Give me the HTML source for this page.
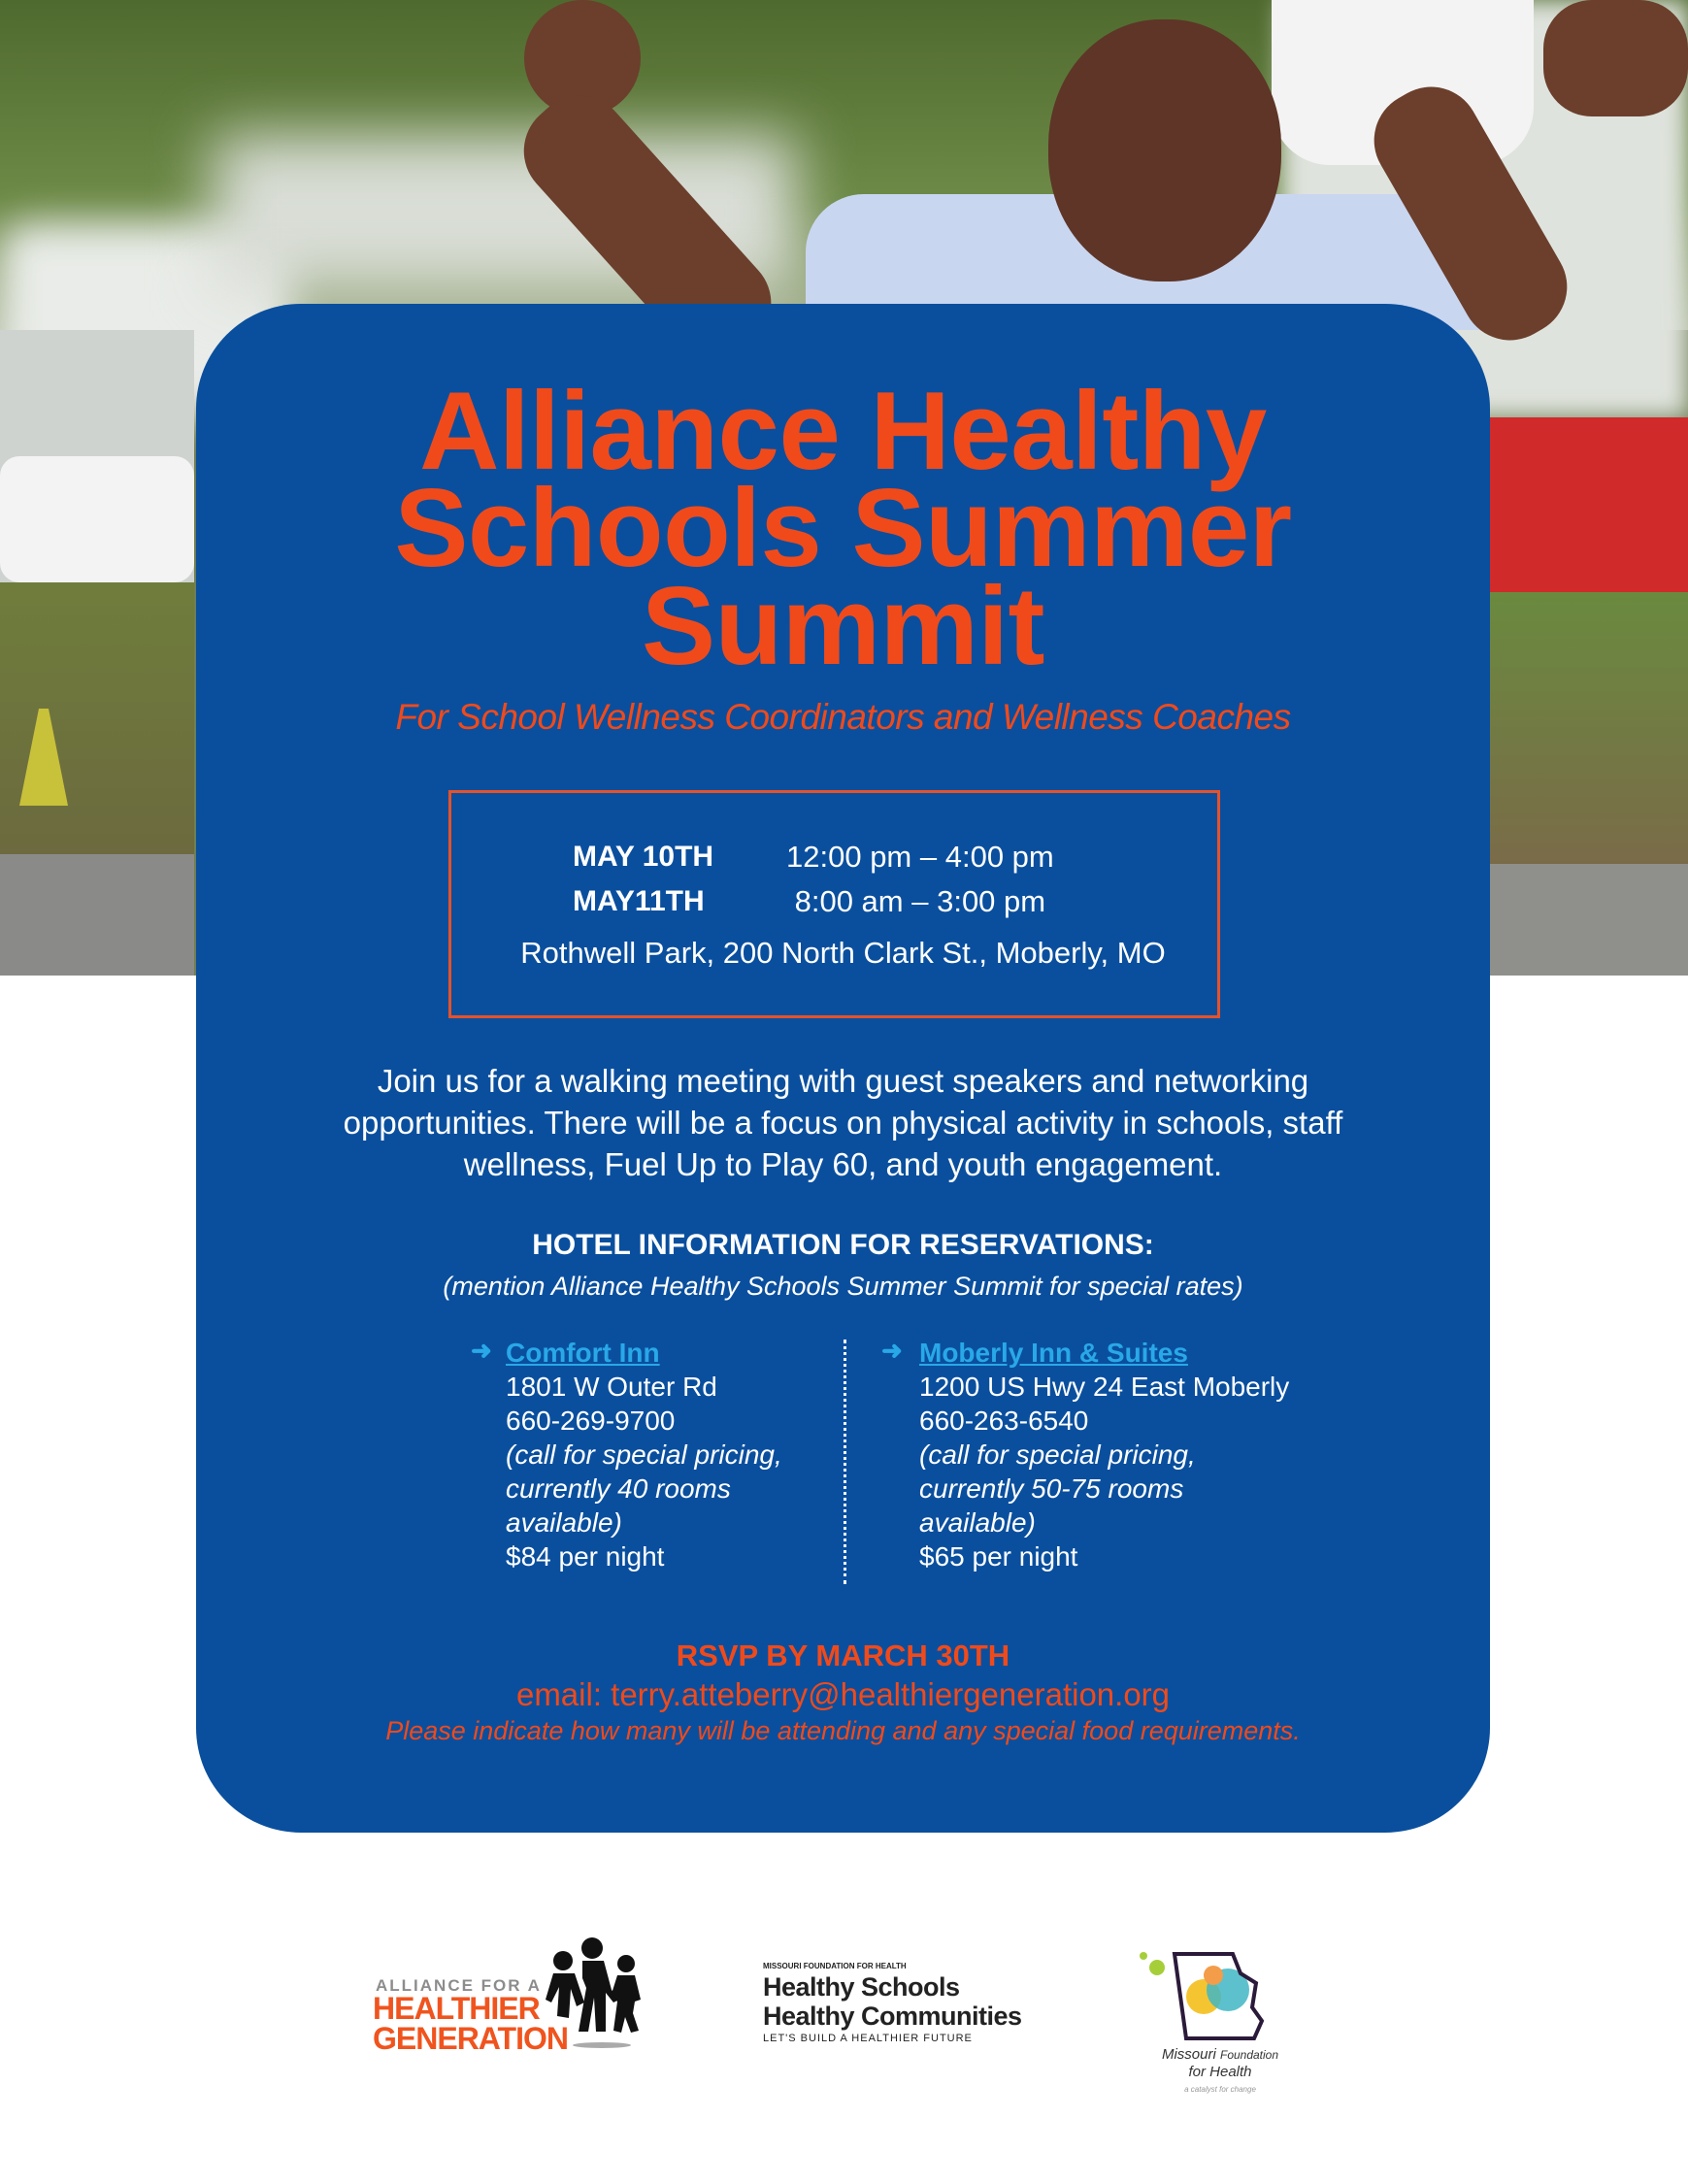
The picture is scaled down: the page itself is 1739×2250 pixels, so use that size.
<!DOCTYPE html>
<html><head><meta charset="utf-8"><style>
*{margin:0;padding:0;box-sizing:border-box}
body{width:1739px;height:2250px;position:relative;background:#fff;font-family:"Liberation Sans",sans-serif;overflow:hidden}
.photo{position:absolute;left:0;top:0;width:1739px;height:1005px;overflow:hidden;background:#6f7f55}
.photo div{position:absolute}
.card{position:absolute;left:202px;top:313px;width:1333px;height:1575px;background:#0a4f9e;border-radius:108px}
.c{position:absolute;left:202px;width:1333px;text-align:center}
.t{color:#f04a1b;font-weight:bold;font-size:114px;letter-spacing:-0.5px;line-height:100px}
.w{color:#fff}
.box{position:absolute;left:462px;top:814px;width:795px;height:235px;border:3px solid #e5522a}
.ab{position:absolute;font-size:28px;color:#fff;line-height:35px}
.ab i{font-style:italic}
.lnk{color:#29a8e8;text-decoration:underline;font-weight:bold}
.arr{position:absolute;color:#29a8e8;font-size:26px;font-weight:bold}
</style></head><body>
<div class="photo">
 <div style="left:0;top:0;width:1739px;height:340px;background:linear-gradient(180deg,#4f6a2e,#6d8a47 60%,#a8b394)"></div>
 <div style="left:0;top:230px;width:300px;height:200px;background:#e9ece8;border-radius:30px;filter:blur(20px)"></div>
 <div style="left:220px;top:140px;width:600px;height:160px;background:#d9ddd6;filter:blur(30px)"></div>
 <div style="left:1320px;top:0;width:419px;height:430px;background:#dfe3dd;filter:blur(12px)"></div>
 <div style="left:1310px;top:0;width:270px;height:170px;background:#f3f3f3;border-radius:0 0 60px 60px"></div>
 <div style="left:0;top:340px;width:200px;height:270px;background:#cfd3cf"></div>
 <div style="left:0;top:470px;width:200px;height:130px;background:#f3f3f3;border-radius:20px"></div>
 <div style="left:0;top:600px;width:200px;height:280px;background:linear-gradient(180deg,#6f7d3c,#6c6a3e)"></div>
 <div style="left:0;top:880px;width:200px;height:125px;background:#8a8b88"></div>
 <div style="left:20px;top:730px;width:50px;height:100px;background:#c8c13a;clip-path:polygon(40% 0,60% 0,100% 100%,0 100%)"></div>
 <div style="left:1535px;top:430px;width:204px;height:180px;background:#d02a2b"></div>
 <div style="left:1535px;top:610px;width:204px;height:280px;background:linear-gradient(180deg,#6a8a3f,#7a6b48)"></div>
 <div style="left:1535px;top:890px;width:204px;height:115px;background:#8f908c"></div>
 <div style="left:540px;top:0;width:120px;height:120px;background:#6b3f2c;border-radius:50%"></div>
 <div style="left:560px;top:60px;width:320px;height:110px;background:#6b3f2c;transform:rotate(48deg);transform-origin:0 50%;border-radius:50px"></div>
 <div style="left:830px;top:200px;width:700px;height:140px;background:#c9d6f0;border-radius:60px 60px 0 0"></div>
 <div style="left:1080px;top:20px;width:240px;height:270px;background:#5e3527;border-radius:48%"></div>
 <div style="left:1460px;top:80px;width:110px;height:280px;background:#6b3f2c;transform:rotate(-30deg);border-radius:50px"></div>
 <div style="left:1590px;top:0;width:149px;height:120px;background:#6b3f2c;border-radius:50px"></div>
</div>
<div class="card"></div>
<div class="c t" style="top:395px">Alliance Healthy</div>
<div class="c t" style="top:495px">Schools Summer</div>
<div class="c t" style="top:596px">Summit</div>
<div class="c" style="top:718px;color:#f04a1b;font-style:italic;font-size:37px;letter-spacing:-0.5px">For School Wellness Coordinators and Wellness Coaches</div>
<div class="box"></div>
<div style="position:absolute;left:590px;top:860px;color:#fff;font-weight:bold;font-size:30px;line-height:46px">MAY 10TH<br>MAY11TH</div>
<div style="position:absolute;left:810px;top:860px;color:#fff;font-size:31px;line-height:46px">12:00 pm – 4:00 pm<br>&nbsp;8:00 am – 3:00 pm</div>
<div class="c w" style="top:964px;font-size:31px">Rothwell Park, 200 North Clark St., Moberly, MO</div>
<div class="c w" style="top:1092px;font-size:33px;line-height:43px">Join us for a walking meeting with guest speakers and networking<br>opportunities. There will be a focus on physical activity in schools, staff<br>wellness, Fuel Up to Play 60, and youth engagement.</div>
<div class="c w" style="top:1266px;font-size:30px;font-weight:bold">HOTEL INFORMATION FOR RESERVATIONS:</div>
<div class="c w" style="top:1310px;font-size:27px;font-style:italic">(mention Alliance Healthy Schools Summer Summit for special rates)</div>
<div class="arr" style="left:485px;top:1376px">➜</div>
<div class="ab" style="left:521px;top:1376px"><span class="lnk">Comfort Inn</span><br>1801 W Outer Rd<br>660-269-9700<br><i>(call for special pricing,<br>currently 40 rooms<br>available)</i><br>$84 per night</div>
<div style="position:absolute;left:869px;top:1380px;height:252px;border-left:3px dotted #fff"></div>
<div class="arr" style="left:908px;top:1376px">➜</div>
<div class="ab" style="left:947px;top:1376px"><span class="lnk">Moberly Inn &amp; Suites</span><br>1200 US Hwy 24 East Moberly<br>660-263-6540<br><i>(call for special pricing,<br>currently 50-75 rooms<br>available)</i><br>$65 per night</div>
<div class="c" style="top:1688px;color:#f04a1b;font-weight:bold;font-size:31px">RSVP BY MARCH 30TH</div>
<div class="c" style="top:1727px;color:#f04a1b;font-size:33px">email: terry.atteberry@healthiergeneration.org</div>
<div class="c" style="top:1768px;color:#f04a1b;font-size:27px;font-style:italic">Please indicate how many will be attending and any special food requirements.</div>
<!-- logos -->
<div style="position:absolute;left:387px;top:2036px;font-size:17px;font-weight:bold;color:#8c8c8c;letter-spacing:2px">ALLIANCE FOR A</div>
<div style="position:absolute;left:384px;top:2054px;font-size:32px;font-weight:bold;color:#f0541e;line-height:31px;letter-spacing:-1px">HEALTHIER<br>GENERATION</div>
<svg style="position:absolute;left:560px;top:1995px" width="120" height="120" viewBox="0 0 120 120">
<g fill="#111"><circle cx="20" cy="25" r="10"/><circle cx="50" cy="12" r="11"/><circle cx="85" cy="28" r="9"/>
<path d="M10 38h22l10 30-8 4-6-18-2 30-12-2 2-30-8 16-6-3z"/><path d="M40 25h22l8 30 8 10-6 3-8-10v40h-10l-2-35-6 35h-10l8-45-4-10z"/><path d="M76 40h18l6 25-6 2-2 12 6 18-8 2-6-16-4 16-8-2 4-30-6-8z"/></g>
<ellipse cx="60" cy="112" rx="30" ry="3" fill="#aaa"/></svg>
<div style="position:absolute;left:786px;top:2021px;font-size:8px;font-weight:bold;color:#222">MISSOURI FOUNDATION FOR HEALTH</div>
<div style="position:absolute;left:786px;top:2032px;font-size:27px;font-weight:bold;color:#222;line-height:30px;letter-spacing:-0.5px">Healthy Schools<br>Healthy Communities</div>
<div style="position:absolute;left:786px;top:2094px;font-size:11px;color:#222;letter-spacing:1px">LET'S BUILD A HEALTHIER FUTURE</div>
<svg style="position:absolute;left:1170px;top:2005px" width="140" height="105" viewBox="0 0 140 105">
<circle cx="8" cy="10" r="4" fill="#a6ce39"/><circle cx="22" cy="22" r="8" fill="#a6ce39"/><circle cx="70" cy="52" r="18" fill="#f5c531"/><circle cx="95" cy="45" r="22" fill="#41b6c4" opacity=".85"/><circle cx="80" cy="30" r="10" fill="#f39c4a"/>
<path d="M40 8h60l8 20 16 10-4 25 10 14-8 18h-70z" fill="none" stroke="#2b1a3a" stroke-width="4"/></svg>
<div style="position:absolute;left:1192px;top:2108px;font-size:15px;font-style:italic;color:#333;line-height:17px;text-align:center;width:130px">Missouri <span style="font-size:12px">Foundation</span><br>for Health</div>
<div style="position:absolute;left:1192px;top:2148px;font-size:8px;font-style:italic;color:#999;text-align:center;width:130px">a catalyst for change</div>
</body></html>
